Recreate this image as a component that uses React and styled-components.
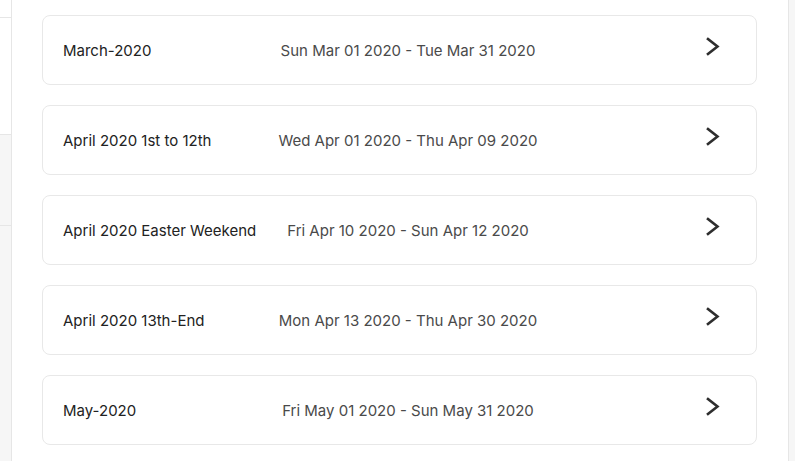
import React from 'react'
import styled, { createGlobalStyle } from 'styled-components'

const GlobalStyle = createGlobalStyle`
    html, body {
        margin: 0;
        padding: 0;
        background: #ffffff;
        font-family: Inter, "Noto Sans", sans-serif;
    }
`

const periods = [
    { name: 'March-2020', range: 'Sun Mar 01 2020 - Tue Mar 31 2020' },
    { name: 'April 2020 1st to 12th', range: 'Wed Apr 01 2020 - Thu Apr 09 2020' },
    { name: 'April 2020 Easter Weekend', range: 'Fri Apr 10 2020 - Sun Apr 12 2020' },
    { name: 'April 2020 13th-End', range: 'Mon Apr 13 2020 - Thu Apr 30 2020' },
    { name: 'May-2020', range: 'Fri May 01 2020 - Sun May 31 2020' },
]

const railSections = [
    { height: 17, grey: false },
    { height: 116, grey: false },
    { height: 90, grey: true },
    { height: 0, grey: true, fill: true },
]

function Chevron() {
    return (
        <svg width="14" height="19" viewBox="0 0 14 19" fill="none">
            <polyline points="2,2 11.5,9.5 2,17" stroke="#2e2e2e" strokeWidth="2.6" strokeLinecap="square" strokeLinejoin="miter" />
        </svg>
    )
}

export default function App() {
    return (
        <Page>
            <GlobalStyle />
            <LeftRail>
                {railSections.map((s, i) => (
                    <RailSection key={i} $grey={s.grey} $fill={s.fill} style={s.fill ? undefined : { height: s.height }} />
                ))}
            </LeftRail>
            <Main>
                <List>
                    {periods.map(p => (
                        <Card key={p.name}>
                            <Name>{p.name}</Name>
                            <Range>{p.range}</Range>
                            <Arrow><Chevron /></Arrow>
                        </Card>
                    ))}
                </List>
            </Main>
            <RightRail />
        </Page>
    )
}

const Page = styled.div`
    display: flex;
    width: 795px;
    height: 461px;
    overflow: hidden;
    background: #ffffff;
`
const LeftRail = styled.div`
    width: 11px;
    flex-shrink: 0;
    border-right: 1px solid #e6e6e6;
    display: flex;
    flex-direction: column;
`
const RailSection = styled.div`
    background: ${props => props.$grey ? '#f6f6f6' : '#ffffff'};
    border-bottom: ${props => props.$fill ? 'none' : '1px solid #e6e6e6'};
    flex: ${props => props.$fill ? 1 : 'none'};
`
const Main = styled.div`
    flex: 1;
    padding: 15px 31px 0 30px;
`
const RightRail = styled.div`
    width: 6px;
    flex-shrink: 0;
    border-left: 1px solid #e6e6e6;
    background: #f6f6f6;
`
const List = styled.div`
    display: flex;
    flex-direction: column;
    gap: 20px;
`
const Card = styled.div`
    height: 68px;
    border: 1px solid #e8e8e8;
    border-radius: 8px;
    display: grid;
    grid-template-columns: 200px 290px 1fr;
    align-items: center;
    padding: 0 36px 0 20px;
`
const Name = styled.div`
    font-size: 15px;
    color: #222222;
    white-space: nowrap;
`
const Range = styled.div`
    font-size: 15px;
    color: #4a4a4a;
    text-align: center;
    white-space: nowrap;
`
const Arrow = styled.div`
    display: flex;
    justify-content: flex-end;
    margin-top: -8px;
`
